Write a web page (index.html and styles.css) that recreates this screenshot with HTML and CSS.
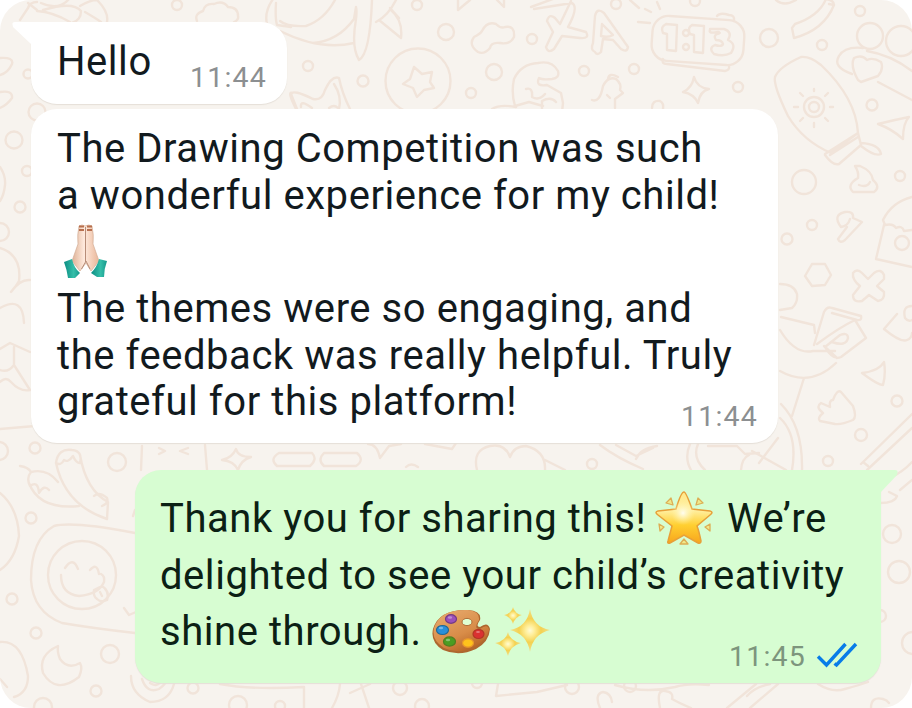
FILE: index.html
```html
<!DOCTYPE html>
<html lang="en">
<head>
<meta charset="utf-8">
<title>Chat</title>
<link rel="stylesheet" href="styles.css">
</head>
<body>
<main class="chat">
<svg class="wallpaper" viewBox="0 0 912 708" aria-hidden="true">
  <!-- small dots -->
  <g>
    <circle cx="177" cy="5" r="5"/><circle cx="308" cy="66" r="5"/><circle cx="363" cy="81" r="5.500"/><circle cx="417" cy="5" r="5"/><circle cx="446" cy="32" r="8"/><circle cx="532" cy="39" r="5"/><circle cx="494" cy="72" r="8"/><circle cx="471" cy="93" r="5"/><circle cx="584" cy="71" r="5"/><circle cx="634" cy="69" r="5"/><circle cx="616" cy="4" r="5"/><circle cx="695" cy="1" r="5"/><circle cx="738" cy="87" r="5"/><circle cx="769" cy="38" r="9"/><circle cx="822" cy="45" r="5"/><circle cx="860" cy="11" r="5"/><circle cx="872" cy="105" r="5.500"/><circle cx="900" cy="176" r="5"/><circle cx="804" cy="182" r="12"/><circle cx="812" cy="225" r="5"/><circle cx="787" cy="239" r="5.500"/><circle cx="897" cy="401" r="5.500"/><circle cx="861" cy="435" r="6"/><circle cx="828" cy="461" r="5"/><circle cx="592" cy="464" r="5"/><circle cx="37" cy="112" r="8.500"/><circle cx="14" cy="140" r="8.500"/><circle cx="27" cy="171" r="5"/><circle cx="20" cy="207" r="5.500"/><circle cx="28" cy="74" r="4.500"/><circle cx="0" cy="232" r="9"/><circle cx="-1" cy="451" r="9"/><circle cx="35" cy="448" r="5.500"/><circle cx="117" cy="462" r="9"/><circle cx="31" cy="518" r="5.500"/><circle cx="12" cy="599" r="5.500"/><circle cx="36" cy="633" r="5.500"/><circle cx="110" cy="654" r="9"/><circle cx="96" cy="691" r="5.500"/><circle cx="43" cy="707" r="9"/><circle cx="193" cy="688" r="5.500"/><circle cx="238" cy="705" r="9"/><circle cx="280" cy="706" r="5"/><circle cx="892" cy="534" r="9"/><circle cx="899" cy="572" r="11"/><circle cx="880" cy="616" r="6"/><circle cx="913" cy="643" r="11"/><circle cx="630" cy="686" r="6"/><circle cx="572" cy="687" r="7"/><circle cx="400" cy="688" r="7"/><circle cx="477" cy="683" r="5"/><circle cx="422" cy="706" r="7"/>
  </g>
  <!-- top left: bow, cloud, bird -->
  <path d="M20 20l8-12q2-6 9-6M37 10l-9-7M41 3q18 8 28-4M37 11q16 1 33 11M43 10q30-9 38 1 0 9-9 12M80 6q10-6 17-6 12 12 10 22M85 12q12 7 16 10"/>
  <path d="M197 21q-3-7 6-10 2-8 11-7 9-4 14 3 10 0 10 9 1 4-4 6M267 24q-3-12 6-25M276 3q-1 15 1 22l14 2"/>
  <path d="M280 21q7 6 26 5 18-6 29-26M280 31q40 20 74 12M313 43q25-2 41-24l2-12q1 4 0 12-5 28 3 41 11-6 13-60M376 22q12-6 20-22M379 20l22 18q2-18-10-28M390 8l9 10"/>
  <path d="M458 0v10l12-10M497 0l7 7v-7"/>
  <path d="M474 37q6-3 8-6 5-10 14-7 5 5 9 3 10-2 9 10-4 8-14 6-9-1-10 5-6 7-12 4-10-7-4-15z"/>
  <circle cx="418" cy="81" r="32.500"/><path d="M414 67l8 7 10-2-2 10 4 6-10 2-7 7-4-9-10-4 7-5z"/>
  <path d="M297 109l-6-15q2-5 22 5 9 2 12-9 7-15 14-12 3 15 11 31M301 107q-1-8 11 1M334 84q8 12 5 25M329 108q5-4 9 0"/>
  <path d="M292 93q-5-2 4 16M515 106q-4-13-1-27 7-15 24-16 14-3 20 8 2 7-6 8-10 1-13-1-4 9 8 7l14 8 2 10-1 9M526 89q7-2 6 8 7 4 13-3M515 106l14-4 14 4M492 109q8-5 24-2M542 109v-8q9-5 14 1"/>
  <path d="M531 7l30-11M534 9l38-6q7 4-4 24l18 5q4 7-6 6l-18-2-8 13q-6 5-8-2l7-15-6-11q2-8 8-3l5 6 11-23"/>
  <path d="M595 52q-5-2-2-9l2-27q2-9 9-3l24 34q-1 6-7 2l-8-9-10-1-2 13q-4 4-6 0zM602 24l11 11q-5 3-12 1z"/>
  <path d="M630 0l9 8M657 2l3 7M645 9l6 3M638 22l12 1"/>
  <!-- alarm clock -->
  <rect x="652" y="18" width="92" height="45" rx="16" transform="rotate(4 698 40)"/>
  <path d="M717 16q3-4 12-1 6 0 5 6M663 59q-2 5 4 5l58 7q5-1 4-5M666 24l11 1-1 26-9-1v-16l-4-1q-3-6 3-9zM692 25l12 1-1 27-9-1v-17l-4-1q-3-6 2-9zM710 29l14 0q9 3 4 11 9 4 3 13-7 4-17 1-6-6 1-9 7 2 8-1-1-4-7-4-3-4 1-6 5-1 1-2-10 2-8-2z"/>
  <circle cx="686" cy="33" r="3"/><circle cx="686" cy="47" r="3"/>
  <path d="M694 77q3 11 15 12-9 2-11 14-4-9-15-11 9-4 11-15zM592 100q8 3 11-14 5-10 13-7 6 5 4 11l3 3-8 6 0 9M608 79q1-7 10-2M607 95l3 3M652 108q0-8 8-7 4 2 3 8"/>
  <path d="M792 28l2 10q30-8 40-33 0-5-8-6-7 17-31 25zM829 4l5 1M776 0q8 7 20 0"/>
  <!-- people -->
  <circle cx="870" cy="36" r="13"/><circle cx="901" cy="41" r="15"/>
  <path d="M852 74q-20-7-13-18 6-10 24-8M867 60q-5-6-13-2-4 8 4 22l3 2 17-6q6-7 3-14-8-5-14-2zM867 51q24 4 45 20M878 82l34 18"/>
  <!-- kite -->
  <path d="M801 57q-22 10-26 20-2 8 13 39 15 25 43 37l27-20q-2-35-37-68-11-9-20-8zM825 154l33-21 3 12-22 19q-6 2-14-9zM830 155l28-18M861 143q18 1 20 11-6 3-20-8"/>
  <circle cx="814" cy="107" r="10"/><circle cx="814" cy="107" r="5"/>
  <path d="M814 91v-2M814 123v4M798 107h-4M830 107h3M803 96l-3-3M825 96l3-3M803 118l-3 3M825 118l3 3"/>
  <path d="M878 124q16-4 31-7-6 6-6 22-11-10-25-15zM855 166q4 6 3 12-12 7-5 14l21 0q7-5-1-12-1-9-13-14zM859 185q8 3 11-3"/>
  <path d="M841 227q-9-12 4-15 9-1 8 6l9 4-17 18q-5 4-7-1l9-12M850 219q-2 7-9 8"/>
  <path d="M912 197q-20 5-29 23l2 5q8-2 11 3 6-3 8 3l8-1M884 225l-8 34 36 8"/><circle cx="902" cy="243" r="7"/>
  <path d="M812 264l13 0 6 11-6 10-13 1-7-10zM853 273q4-5 9 0l6 6 6-6q7-5 10 2l0 4-7 7 7 6q1 8-6 9l-9-6-7 6q-9 2-9-6l7-9q-8-6-7-13z"/>
  <path d="M780 284q14 0 17 10 1 9-5 14l-12 2M781 317l33 8M814 345l10-33q3-6 8-4l29 8q1 5-4 4l-25-7M817 344q23-17 38-24l11 18-25 19q-8 4-16-10l15-12q8-3 8 3-2 9-16 4M824 346l13 12M814 325l1 8M780 330q15 25 33 21l22 0M780 371q30 17 56-8M804 378l-12 38M781 404q22 22 21 66M780 418q18 17 12 52M778 438l-19 25M752 451l34 19"/>
  <path d="M912 306q-10 0-7 12 3 4 7 2M897 314l-13 15q17 14 23 11 5-2 5-7M862 373q17-2 22-11 2 12-1 23-5 0-21-12zM833 400q4-11 8-8l12 14q4 11 0 14-12 5-18 4l-15-3q-3-3 3-8-8-6-2-10l9 4q-1-7 3-7zM861 464l51-50M867 470l45-42M863 462l5 4"/>
  <!-- left side -->
  <path d="M0 58q14-1 12 6-4 9-12 11M0 92q13-2 12 6-5 7-12 10M0 167q6 9 5 18-1 10-5 16M0 248q22 7 19 33-4 7-8 11 9-13 19-12M0 308q23-13 24 15M0 349l10-6 20 9M14 347v18q-6 8-14 5M14 365l16 25M0 382q6-6 11 0 9 10 19 8M0 429l35-3"/>
  <!-- chillies -->
  <path d="M20 466q8 1 11 6-5 6-1 14 8-6 9 7 5-9 10-3M31 472q16-4 27 10M29 483q10 27 50 23M56 463q2-15 16-13 11 1 8 13-4 0-7-7-5 7-9 4-3 6-8 3M56 463q9 42 51 56l1-17q-22-12-28-47M94 496q5-5 13 2 2 5-5 8"/>
  <path d="M142 446l-1 24M159 448l6 3-6 3M188 448l-8 3 8 3M205 445l2 25M236 449q2 8 15 8-10 3-13 13-4-9-16-10 10-2 14-11zM279 453h33q6 6-2 13h-33q-8-7 2-13zM324 453h33q8 7-1 13h-32q-7-6 0-13zM368 444q9 0 12 14l9-12 12-2M406 467q5-5 12 0M425 444l27 5 4-6M477 470q-5-20 13-24 15-3 20 11 4-11 16-11 20 5 19 24M545 460l20 10M600 445q17 13 43 24M616 445l20 11 17-8M636 459q5-11 21-13M690 444q-6 14 1 26M698 444q-6 14 7 26M708 446l29 0 8 8 14-1M741 470q1-12 8-15"/>
  <path d="M0 493q18 15 19 43-4 24-19 34M135 533q-62-12-81-7-23 13-23 54 2 32 31 43 29 5 73 10M124 608l5 7 7-3M133 516l2-6M0 642q22-2 28 34 0 17-14 21M0 679l7 8"/>
  <circle cx="82" cy="575" r="34"/><path d="M61 575q0 19 18 21 20-2 25-14 1-6-3-8M65 568q8-12 13 1M90 570q7-8 9 4M94 590l8-4q8 5 5 14-6 3-10-1-4-3-3-9zM100 592l2 4"/>
  <path d="M58 646q-20 9-15 27 13 22 36 4 4-9 1-14-12 7-20-4-3-7-2-13zM131 676q0 18 19 26 19 0 24-18M142 679q5 15 17 10 7-5 8-10M150 683q7 5 12-3"/>
  <path d="M220 684q31 6 84 3v21M340 684q-1 12-8 24M361 684l8 24M350 693l20-9M498 684l-2 12 41-4 30-7M615 685q30 9 60 2 12-4 34-2M756 684l-29 24M778 684l-28 24M770 684q-15 3-23 12M660 708q-4-19 5-17 9 1 7 8 7 4 19 9M600 708q-6-14 3-16 8 1 9 10M818 684q14 9 27 5 15-4 23-7M871 708q0-12 12-9 4 1 6 4M890 478q14-7 22-16M880 503q15 0 17-7l-8-4M900 490l12-10"/>
</svg>

<section class="bubble received tailed greeting">
  <p class="message hello">Hello</p><time>11:44</time>
</section>

<section class="bubble received review">
  <div class="message">
    <p>The Drawing Competition was such</p>
    <p>a wonderful experience for my child!</p>
    <p class="emoji-line"><svg class="hands" viewBox="0 0 46 54" role="img" aria-label="Folded hands">
      <defs><linearGradient id="skin"><stop stop-color="#deb195"/><stop offset=".45" stop-color="#ffeadd"/><stop offset="1" stop-color="#e9b698"/></linearGradient><linearGradient id="cuff"><stop stop-color="#0b8d82"/><stop offset=".6" stop-color="#35bea9"/><stop offset="1" stop-color="#15998c"/></linearGradient></defs>
      <path d="M16 2q3-2 6 0 4-2 7 0 2 9 1 18l6 17-8 10-5-8-6 8-8-10 6-17q-1-9 1-18z" fill="url(#skin)" stroke="#d3ad97" stroke-width=".7"/>
      <path d="M16 2.500h5M24 2.500h5M16 6h5M24 6h5" stroke="#b8704f" stroke-width="2" fill="none"/>
      <path d="M22.500 3v35l-4 7M23 37l4 8" stroke="#b78d78" fill="none" stroke-width="1"/>
      <path d="M1 38l8-3q2 9 8 14l-5 5H5q-1-8-4-16z" fill="url(#cuff)"/><path d="M36 35l8 2q-3 8-3 16h-7l-6-4q6-6 8-14z" fill="url(#cuff)"/>
    </svg></p>
    <p>The themes were so engaging, and</p>
    <p>the feedback was really helpful. Truly</p>
    <p>grateful for this platform!</p>
  </div>
  <time>11:44</time>
</section>

<section class="bubble sent tailed">
  <div class="message">
    <p class="s1"><span class="s1a">Thank you for sharing this!</span><svg class="star" viewBox="0 0 58 56" role="img" aria-label="Glowing star">
      <defs><linearGradient id="gold" x2="0" y2="1"><stop stop-color="#ffe98a"/><stop offset=".35" stop-color="#fff0a4"/><stop offset=".65" stop-color="#ffcf30"/><stop offset="1" stop-color="#f7a51d"/></linearGradient><radialGradient id="shine"><stop stop-color="#fffdf0"/><stop offset="1" stop-color="#fff5a5" stop-opacity="0"/></radialGradient></defs>
      <path d="M29 2q2 0 8 17l18 2q4 1 0 4L42 36q2 5 4 15 0 3-3 2L29 45 15 53q-3 1-2-2l4-15L3 25q-4-3 0-4l18-2q5-17 8-17z" fill="url(#gold)" stroke="#e7a039" stroke-width="1.500"/>
      <ellipse cx="28" cy="23" rx="12" ry="12" fill="url(#shine)"/>
      <g fill="#efe98a" stroke="#ddae54" stroke-width="1.300" stroke-linejoin="round"><path d="M11 13l5-5 2 7zM41 15l2-7 5 5zM4 34l5 3-4 4zM50 37l5-3 0 7zM29 49l4 5-8 0z"/></g>
    </svg><span class="s1b">We’re</span></p>
    <p>delighted to see your child’s creativity</p>
    <p class="s3"><span class="s3a">shine through.</span><svg class="palette" viewBox="0 0 58 46" role="img" aria-label="Artist palette">
      <defs><linearGradient id="wood" x1="0" y1="0" x2=".6" y2="1"><stop stop-color="#e9ae72"/><stop offset=".65" stop-color="#d88c48"/><stop offset="1" stop-color="#b76527"/></linearGradient></defs>
      <path d="M36 1q14 1 12 10-5 7 0 7 8-6 10 2-1 13-14 20-17 8-33 1Q-2 33 1 20 7 0 36 1z" fill="#ae672f"/><path d="M36 1q12 1 11 10-6 9 1 9 8-6 9 1-2 10-14 17-16 8-31 1Q-1 31 2 19 8 0 36 1z" fill="url(#wood)"/>
      <ellipse cx="35" cy="13" rx="5" ry="3.600" fill="#dfffd2" stroke="#ae6e38"/>
      <g stroke-width="1.200"><ellipse cx="19" cy="10" rx="5.500" ry="4.300" fill="#9b50b9" stroke="#763a85"/><ellipse cx="10.500" cy="21" rx="6" ry="4.500" fill="#288fda" stroke="#226995"/><ellipse cx="17.500" cy="32.500" rx="6" ry="4.600" fill="#4b9d22" stroke="#507d20"/><ellipse cx="36" cy="34" rx="5.500" ry="4.200" fill="#ffc21c" stroke="#e8962c"/><ellipse cx="46.500" cy="25" rx="5.500" ry="4.500" fill="#da3131" stroke="#b33425"/></g>
      <g fill="#fff" opacity=".35"><ellipse cx="18" cy="8.500" rx="2.200" ry="1.200"/><ellipse cx="9" cy="19" rx="2.200" ry="1.200"/><ellipse cx="16" cy="31" rx="2.200" ry="1.200"/><ellipse cx="46" cy="23" rx="2" ry="1"/></g>
    </svg><svg class="sparkles" viewBox="0 0 56 52" role="img" aria-label="Sparkles">
      <defs><radialGradient id="glow"><stop stop-color="#fffbd5"/><stop offset=".22" stop-color="#ffef9b"/><stop offset=".55" stop-color="#f4d151"/><stop offset="1" stop-color="#efe18c"/></radialGradient></defs>
      <g fill="url(#glow)"><path d="M35 3q3 18 20 21-17 4-20 22-3-18-20-22Q32 21 35 3z"/><path d="M13 26q2 9 13 11-11 3-13 13-2-10-13-13 11-2 13-11z"/><path d="M18 1q2 7 9 8-7 2-9 9-2-7-9-9 7-1 9-8z"/></g>
    </svg></p>
  </div>
  <div class="meta"><time>11:45</time><svg class="checks" viewBox="0 0 42 26" role="img" aria-label="Read"><path d="M2 14.500l8.500 8.500L29.500 2M18.500 21.500l2 1.500L40 2"/></svg></div>
</section>
</main>
</body>
</html>
```
FILE: styles.css
```css
* { box-sizing: border-box; }
body { margin: 0; background: #fff; font-family: Roboto, sans-serif; }
p { margin: 0; white-space: nowrap; }

.chat {
  position: relative;
  width: 912px;
  height: 708px;
  padding: 22px 31px 25px;
  display: flex;
  flex-direction: column;
  overflow: hidden;
  border-radius: 31px;
  background: #f7f3ee;
}
.wallpaper {
  position: absolute;
  inset: 0;
  width: 912px;
  height: 708px;
  fill: none;
  stroke: #f1e4da;
  stroke-width: 2.400;
  stroke-linecap: round;
  stroke-linejoin: round;
}

.bubble {
  position: relative;
  display: flex;
  border-radius: 26px;
  box-shadow: 0 1px 1px #e5dfd8;
  color: #121a1e;
  font-size: 40px;
  line-height: 46.600px;
  letter-spacing: .55px;
}
.received { background: #fff; }

.greeting {
  width: 256px;
  height: 82px;
  padding: 17px 20px 9px 26px;
  justify-content: space-between;
  border-top-left-radius: 0;
}
.greeting time { align-self: flex-end; }
.review {
  width: 747px;
  height: 334px;
  margin-top: 5px;
  padding: 17px 20px 9px 26px;
  flex-direction: column;
}
.review .message { height: 274px; }
.review time { align-self: flex-end; }
.sent {
  width: 746px;
  height: 213px;
  margin: 27px 0 0 104px;
  padding: 21px 23px 9px 25px;
  flex-direction: column;
  background: #d7fdd2;
  color: #0b2014;
  line-height: 56.500px;
  border-top-right-radius: 0;
}
.sent .message { height: 149px; }

.tailed::before {
  content: "";
  position: absolute;
  top: 0;
  width: 20px;
  height: 22px;
}
.greeting::before {
  left: -19px;
  background: #fff;
  border-top-left-radius: 3px;
  clip-path: polygon(0 0, 100% 0, 100% 100%, 95% 100%, 1px 5px);
}
.sent::before {
  right: -17px;
  background: #d7fdd2;
  border-top-right-radius: 3px;
  clip-path: polygon(0 0, 100% 0, calc(100% - 1px) 5px, 3px 100%, 0 100%);
}

.emoji-line { height: 67px; padding: 5px 0 0 6px; }
.hands { display: block; width: 46px; height: 54px; }

time {
  color: #8c8f91;
  font-size: 28.500px;
  line-height: 34px;
  letter-spacing: 1.200px;
}
.meta {
  display: flex;
  align-items: flex-start;
  align-self: flex-end;
  gap: 10px;
  height: 34px;
}
.sent time { color: #7d957d; }
.checks {
  width: 42px;
  height: 26px;
  margin-top: 2px;
  fill: none;
  stroke: #087ce8;
  stroke-width: 3.400;
}

.s1, .s3 { display: flex; height: 56.500px; }
.s1a { width: 495px; }
.star { width: 58px; height: 56px; margin-top: -1px; }
.s1b { margin-left: 14px; }
.s3a { width: 272px; }
.palette { width: 58px; height: 46px; margin-top: 5px; }
.sparkles { width: 56px; height: 52px; margin: 2px 0 0 5px; }
```
